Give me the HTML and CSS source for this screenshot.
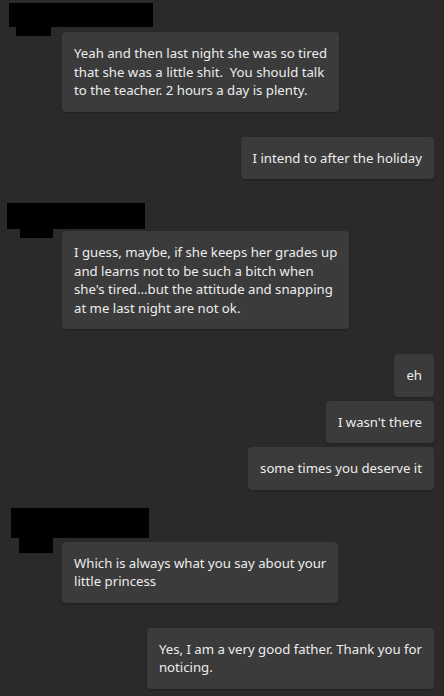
FILE: index.html
```html
<!DOCTYPE html>
<html>
<head>
<meta charset="utf-8">
<link rel="stylesheet" href="styles.css">
</head>
<body>
<div class="chat">
  <div class="group in g1">
    <div class="sender"><span class="redact big"></span><span class="redact small"></span></div>
    <div class="bubble">Yeah and then last night she was so tired<br>that she was a little shit.&nbsp; You should talk<br>to the teacher. 2 hours a day is plenty.</div>
  </div>
  <div class="group out">
    <div class="bubble">I intend to after the holiday</div>
  </div>
  <div class="group in g2">
    <div class="sender"><span class="redact big"></span><span class="redact small"></span></div>
    <div class="bubble">I guess, maybe, if she keeps her grades up<br>and learns not to be such a bitch when<br>she's tired...but the attitude and snapping<br>at me last night are not ok.</div>
  </div>
  <div class="group out">
    <div class="bubble">eh</div>
    <div class="bubble">I wasn't there</div>
    <div class="bubble">some times you deserve it</div>
  </div>
  <div class="group in g3">
    <div class="sender"><span class="redact big"></span><span class="redact small"></span></div>
    <div class="bubble">Which is always what you say about your<br>little princess</div>
  </div>
  <div class="group out">
    <div class="bubble">Yes, I am a very good father. Thank you for<br>noticing.</div>
  </div>
</div>
</body>
</html>
```
FILE: styles.css
```css
html, body {
  margin: 0;
  padding: 0;
  background: #2a2a2a;
}
body {
  font-family: "Noto Sans", "Open Sans", sans-serif;
  font-size: 13.2px;
  color: #ededed;
  height: 696px;
  overflow: hidden;
}
.chat {
  display: flex;
  flex-direction: column;
  gap: 25px;
  padding: 5px 10px 0 0;
}
.group {
  display: flex;
  flex-direction: column;
  gap: 4px;
  position: relative;
}
.group.in {
  align-items: flex-start;
  padding-left: 62px;
  gap: 0;
}
.group.out {
  align-items: flex-end;
}
.sender {
  height: 27px;
}
.bubble {
  background: #3b3b3b;
  border-radius: 4px;
  padding: 12px;
  line-height: 18.5px;
  white-space: nowrap;
  box-shadow: 0 1px 2px rgba(0, 0, 0, 0.25);
}
.redact {
  position: absolute;
  background: #000;
}
.g1 .big { left: 9px; top: -2px; width: 144px; height: 24px; }
.g1 .small { left: 16px; top: 22px; width: 35px; height: 9px; }
.g2 .big { left: 7px; top: -1px; width: 138px; height: 26px; }
.g2 .small { left: 20px; top: 25px; width: 33px; height: 9px; }
.g3 .big { left: 11px; top: -7px; width: 138px; height: 30px; }
.g3 .small { left: 19px; top: 23px; width: 34px; height: 15px; }
```
